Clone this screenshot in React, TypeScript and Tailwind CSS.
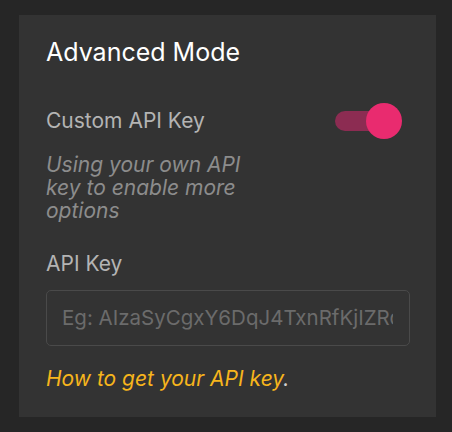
import React from "react";

export default function App() {
  return (
    <div
      className="w-[452px] h-[432px] bg-[#262626] pl-[19px] pr-[16px] pt-[15px] pb-[15px]"
      style={{ fontFamily: "Inter, 'Noto Sans', sans-serif" }}
    >
      <div className="h-full bg-[#333333] pl-[27px] pr-[26px] pt-[22px] flex flex-col">
        <h2 className="text-[25px] leading-[30px] text-white font-normal">Advanced Mode</h2>

        <div className="mt-[36px] flex items-center justify-between">
          <span className="text-[21px] leading-[26px] text-[#b4b4b4]">Custom API Key</span>
          <div className="relative w-[67px] h-[36px] mr-[8px] flex items-center">
            <div className="w-[58px] h-[20px] rounded-full bg-[#8c2c52]" />
            <div className="absolute right-0 top-0 w-[36px] h-[36px] rounded-full bg-[#e92b6f]" />
          </div>
        </div>

        <p className="mt-[14px] w-[220px] text-[21px] leading-[23px] italic text-[#8c8c8c]">
          Using your own API key to enable more options
        </p>

        <label className="mt-[29px] text-[21px] leading-[26px] text-[#b4b4b4]">API Key</label>

        <div className="mt-[13px] h-[56px] rounded-[5px] border border-[#4a4a4a] flex items-center pl-[15px] pr-[16px] overflow-hidden">
          <input
            className="w-full bg-transparent outline-none text-[20.5px] text-[#d0d0d0] placeholder:text-[#6b6b6b]"
            placeholder="Eg: AIzaSyCgxY6DqJ4TxnRfKjIZRqQ3GwXYZ"
          />
        </div>

        <p className="mt-[21px] text-[21px] leading-[23px] italic">
          <a className="text-[#f7b51c]">How to get your API key</a>
          <span className="text-[#cfcfcf]">.</span>
        </p>
      </div>
    </div>
  );
}
